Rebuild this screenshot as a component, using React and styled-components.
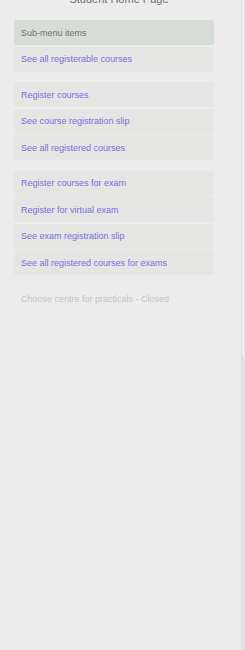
import React from 'react';
import styled, { createGlobalStyle } from 'styled-components';

const GlobalStyle = createGlobalStyle`
    html, body {
        margin: 0;
        padding: 0;
        background: #ececec;
        overflow: hidden;
    }
`;

const Page = styled.div`
    display: flex;
    width: 245px;
    height: 650px;
    background: #ececec;
    font-family: "Liberation Sans", Arial, sans-serif;
    overflow: hidden;
`;

const Main = styled.div`
    flex: 1;
    display: flex;
    flex-direction: column;
    padding: 0 27px 0 14px;
`;

const Title = styled.div`
    margin-top: -7px;
    height: 27px;
    padding-left: 10px;
    text-align: center;
    font-size: 11px;
    line-height: 13px;
    color: #6b6f78;
`;

const Group = styled.div`
    display: flex;
    flex-direction: column;
    gap: 1.5px;
    margin-bottom: 10.5px;
`;

const Item = styled.a`
    display: flex;
    align-items: center;
    height: 25px;
    padding: 0 7px;
    border-radius: 2px;
    font-size: 9px;
    text-decoration: none;
    background: ${p => (p.$head ? '#d5ddd6' : '#e5e6e3')};
    color: ${p => (p.$head ? '#6e6e6e' : '#756fe2')};
`;

const Closed = styled.div`
    padding: 8px 7px;
    font-size: 9px;
    color: #c3c3c3;
`;

const Rail = styled.div`
    width: 3px;
    border-left: 1px solid #dadada;
    background: #e3e3e3;
    display: flex;
    flex-direction: column;
`;

const Thumb = styled.div`
    height: 357px;
    background: #eeeeee;
    border-right: 1px solid #e2e2e2;
`;

const groups = [
    [
        { text: 'Sub-menu items', head: true },
        { text: 'See all registerable courses' },
    ],
    [
        { text: 'Register courses' },
        { text: 'See course registration slip' },
        { text: 'See all registered courses' },
    ],
    [
        { text: 'Register courses for exam' },
        { text: 'Register for virtual exam' },
        { text: 'See exam registration slip' },
        { text: 'See all registered courses for exams' },
    ],
];

export default function App() {
    return (
        <Page>
            <GlobalStyle />
            <Main>
                <Title>Student Home Page</Title>
                {groups.map((g, i) => (
                    <Group key={i}>
                        {g.map(item => (
                            <Item key={item.text} $head={item.head} href={item.head ? undefined : '#'}>
                                {item.text}
                            </Item>
                        ))}
                    </Group>
                ))}
                <Closed>Choose centre for practicals - Closed</Closed>
            </Main>
            <Rail>
                <Thumb />
            </Rail>
        </Page>
    );
}
